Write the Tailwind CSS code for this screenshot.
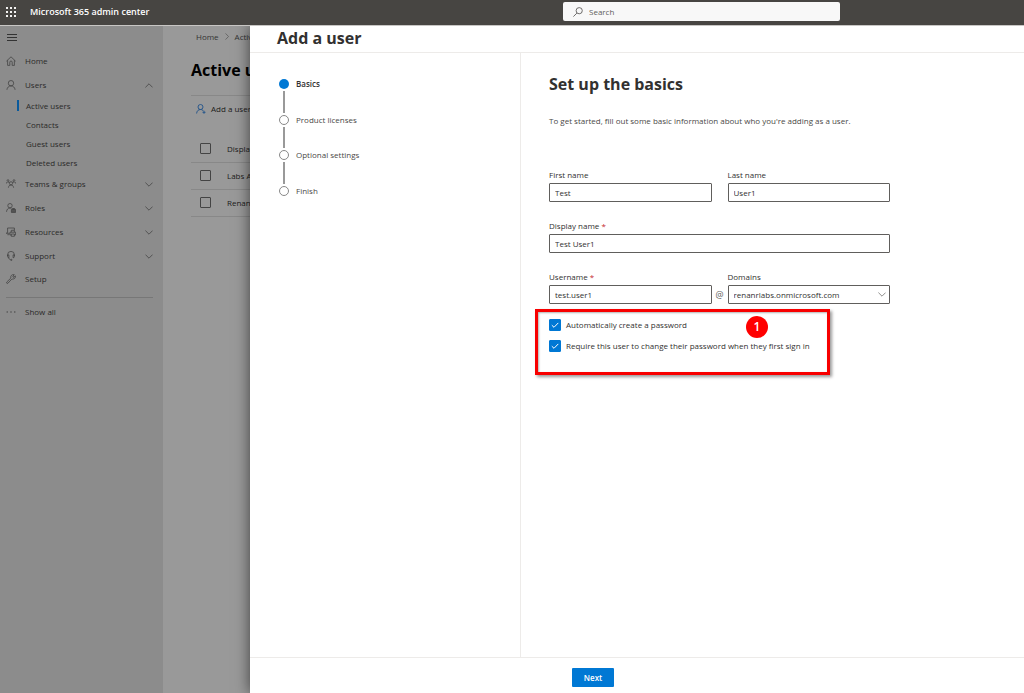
<!DOCTYPE html>
<html lang="en">
<head>
<meta charset="utf-8">
<meta name="viewport" content="width=device-width, initial-scale=1">
<title>Add a user - Microsoft 365 admin center</title>
<script src="https://cdn.jsdelivr.net/npm/@tailwindcss/browser@4"></script>
</head>
<body class="relative flex h-screen flex-col overflow-hidden bg-[#999] font-['Open_Sans','Noto_Sans',sans-serif] text-[8px] leading-3 text-[#323130]">

<header class="flex h-[26px] shrink-0 items-center border-b border-[#c8c6c4] bg-[#474542] pb-[2px] pl-[6px]">
  <button type="button" aria-label="App launcher" class="flex size-[10px] items-center justify-center">
    <svg class="size-[10px]" viewBox="0 0 10 10" fill="#f3f2f1"><rect width="2" height="2"/><rect x="4" width="2" height="2"/><rect x="8" width="2" height="2"/><rect y="4" width="2" height="2"/><rect x="4" y="4" width="2" height="2"/><rect x="8" y="4" width="2" height="2"/><rect y="8" width="2" height="2"/><rect x="4" y="8" width="2" height="2"/><rect x="8" y="8" width="2" height="2"/></svg>
  </button>
  <a href="#" class="ml-[14px] w-[533px] shrink-0 text-[9px] font-semibold text-white">Microsoft 365 admin center</a>
  <label class="flex h-[19px] w-[277px] items-center gap-[6px] rounded-[2px] bg-[#f8f8f8] px-[10px]">
    <svg class="size-[10px] shrink-0" viewBox="0 0 10 10" fill="none" stroke="#605e5c" stroke-width=".9"><circle cx="6.200" cy="3.700" r="3.100"/><path d="M3.900 6.100.4 9.600"/></svg>
    <input type="search" aria-label="Search" placeholder="Search" class="min-w-0 flex-1 outline-none placeholder:text-[#605e5c]">
  </label>
</header>

<div class="flex min-h-0 flex-1">
  <nav aria-label="Admin" class="w-[163px] shrink-0 bg-[#8c8c8c] text-[#2b2a29]">
    <button type="button" aria-label="Collapse navigation" class="flex h-[23px] items-center pl-[7px]">
      <svg class="h-[7px] w-[10px]" viewBox="0 0 10 7" stroke="#333" stroke-width="1"><path d="M0 .5h10M0 3.500h10M0 6.500h10"/></svg>
    </button>
    <a href="#" class="flex h-6 items-center gap-[9px] pl-[6px]">
      <svg class="size-[10px]" viewBox="0 0 10 10" fill="none" stroke="#444" stroke-width=".8"><path d="M.4 5.200 5 .8l4.600 4.400M1.600 4.200v5.200h2.200V6.200a1.200 1.200 0 0 1 2.400 0v3.200h2.200V4.200"/></svg>
      Home</a>
    <button type="button" aria-expanded="true" class="flex h-6 w-full items-center gap-[9px] pr-[10px] pl-[6px]">
      <svg class="size-[10px]" viewBox="0 0 10 10" fill="none" stroke="#444" stroke-width=".8"><circle cx="5" cy="3.200" r="2.700"/><path d="M.900 9.800C1.200 7.400 2.800 5.900 5 5.900s3.800 1.500 4.100 3.900"/></svg>
      <span class="flex-1 text-left">Users</span>
      <svg class="h-[5px] w-2" viewBox="0 0 8 5" fill="none" stroke="#444" stroke-width=".8"><path d="M.4 4.400 4 .8l3.600 3.600"/></svg>
    </button>
    <ul class="-mt-px">
      <li><a href="#" aria-current="page" class="flex h-[19px] items-center gap-[7px] pl-[17px]"><span class="h-[11px] w-[2px] bg-[#0a5a9c]"></span>Active users</a></li>
      <li><a href="#" class="flex h-[19px] items-center pl-[26px]">Contacts</a></li>
      <li><a href="#" class="flex h-[19px] items-center pl-[26px]">Guest users</a></li>
      <li><a href="#" class="flex h-[19px] items-center pl-[26px]">Deleted users</a></li>
    </ul>
    <button type="button" class="flex h-6 w-full items-center gap-[9px] pr-[10px] pl-[6px]">
      <svg class="size-[10px]" viewBox="0 0 10 10" fill="none" stroke="#444" stroke-width=".8"><circle cx="5" cy="4.300" r="1.600"/><path d="M2.400 8.700C2.600 7 3.500 6 5 6s2.400 1 2.600 2.700"/><path d="M.2 4.600C.3 3.500.9 2.900 1.900 2.900M1 1.900a1 1 0 1 1 1.900.3c-.2.500-.6.700-1 .7.700 0 1.200.3 1.500.9M9.800 4.600C9.700 3.500 9.100 2.900 8.100 2.900M9 1.900a1 1 0 1 0-1.900.3c.2.500.6.700 1 .7-.7 0-1.200.3-1.500.9"/></svg>
      <span class="flex-1 text-left">Teams &amp; groups</span>
      <svg class="h-[5px] w-2" viewBox="0 0 8 5" fill="none" stroke="#444" stroke-width=".8"><path d="M.4.6 4 4.200 7.600.6"/></svg>
    </button>
    <button type="button" class="flex h-6 w-full items-center gap-[9px] pr-[10px] pl-[6px]">
      <svg class="size-[10px]" viewBox="0 0 10 10" fill="none" stroke="#444" stroke-width=".8"><circle cx="4" cy="2.700" r="2.200"/><path d="M.500 8.800C.700 6.500 2 5 4 5c.6 0 1 .1 1.400.3"/><path d="M5.400 6.400h4.200v3H5.400zM6.500 6.400v-.9h2v.9" fill="#555"/></svg>
      <span class="flex-1 text-left">Roles</span>
      <svg class="h-[5px] w-2" viewBox="0 0 8 5" fill="none" stroke="#444" stroke-width=".8"><path d="M.4.6 4 4.200 7.600.6"/></svg>
    </button>
    <button type="button" class="flex h-6 w-full items-center gap-[9px] pr-[10px] pl-[6px]">
      <svg class="size-[10px]" viewBox="0 0 10 10" fill="none" stroke="#444" stroke-width=".8"><path d="M1.600 5.600V1h6.800v2.200M.2 6.300h3.600M.2 6.300l1.400-1M3.500 7.700H1.400"/><path d="M5.300 8H4V5.200h5.600V8H8.400M5.300 5.200V3.300h3.100v1.900M5.300 7h3.100v2.300H5.300z"/></svg>
      <span class="flex-1 text-left">Resources</span>
      <svg class="h-[5px] w-2" viewBox="0 0 8 5" fill="none" stroke="#444" stroke-width=".8"><path d="M.4.6 4 4.200 7.600.6"/></svg>
    </button>
    <button type="button" class="flex h-6 w-full items-center gap-[9px] pr-[10px] pl-[6px]">
      <svg class="size-[10px]" viewBox="0 0 10 10" fill="none" stroke="#444" stroke-width=".8"><path d="M1.600 5V3.800a3.400 3.400 0 0 1 6.800 0V5M1.600 3.900h1.300v2.900c-.8 0-1.300-.5-1.300-1.300zM8.400 3.900H7.100v2.900c.8 0 1.300-.5 1.300-1.300zM2.800 6.800c.2 1.200.9 1.900 2 2"/><circle cx="5.400" cy="8.900" r=".6"/></svg>
      <span class="flex-1 text-left">Support</span>
      <svg class="h-[5px] w-2" viewBox="0 0 8 5" fill="none" stroke="#444" stroke-width=".8"><path d="M.4.6 4 4.200 7.600.6"/></svg>
    </button>
    <a href="#" class="-mt-px flex h-6 items-center gap-[9px] pl-[6px]">
      <svg class="size-[10px]" viewBox="0 0 10 10" fill="none" stroke="#444" stroke-width=".8"><path d="M8.300.7 6.900 2.100l.1 1 1 .1L9.300 1.800c.5 1.600-.6 3.300-2.400 3.300-.4 0-.6 0-.9-.2L2 9.100c-.8.9-2-.2-1.200-1.100l4.100-4C4.100 2 6 0 8.300.7z"/></svg>
      Setup</a>
    <hr class="mt-[6px] mr-[10px] mb-[2px] ml-[6px] border-[#777]">
    <button type="button" class="flex h-6 items-center gap-[9px] pl-[6px]">
      <svg class="size-[10px]" viewBox="0 0 10 10" fill="#444"><circle cx="1.200" cy="5" r=".7"/><circle cx="5" cy="5" r=".7"/><circle cx="8.800" cy="5" r=".7"/></svg>
      Show all</button>
  </nav>

  <main class="min-w-0 flex-1 pl-[28px] whitespace-nowrap text-[#1b1a19]">
    <div class="flex h-[21px] items-center gap-[6px] pl-[5px] text-[#333]">
      <a href="#">Home</a>
      <svg class="h-[7px] w-1" viewBox="0 0 4 7" fill="none" stroke="#555" stroke-width=".7"><path d="M.5.4 3.500 3.500.5 6.600"/></svg>
      <a href="#">Active users</a>
    </div>
    <h1 class="mt-[13px] text-[16px] leading-5 font-bold text-black">Active users</h1>
    <div class="mt-[15px] flex h-[26px] items-center gap-[5px] border-t border-[#888] pl-[5px]">
      <svg class="size-[10px]" viewBox="0 0 10 10" fill="none" stroke="#20528a" stroke-width=".9"><circle cx="4.500" cy="3" r="2.500"/><path d="M.6 9.500C.8 7 2.300 5.500 4.500 5.500c1.300 0 2.300.6 2.900 1.500M6.500 8.300h3M8 6.800v3"/></svg>
      <button type="button">Add a user</button>
    </div>
    <table class="mt-[15px] w-full text-left text-[8px]">
      <thead>
        <tr class="h-[26px] border-b border-[#888]"><th class="w-[36px] pl-[9px]"><input type="checkbox" aria-label="Select all" class="block size-[11px] appearance-none rounded-[1px] border border-[#444]"></th><th class="font-normal">Display name</th></tr>
      </thead>
      <tbody>
        <tr class="h-[27px] border-b border-[#888]"><td class="pl-[9px]"><input type="checkbox" aria-label="Select Labs Admin" class="block size-[11px] appearance-none rounded-[1px] border border-[#444]"></td><td>Labs Admin</td></tr>
        <tr class="h-[27px] border-b border-[#888]"><td class="pl-[9px]"><input type="checkbox" aria-label="Select Renan" class="block size-[11px] appearance-none rounded-[1px] border border-[#444]"></td><td>Renan</td></tr>
      </tbody>
    </table>
  </main>
</div>

<!-- Side panel over the dimmed page -->
<section role="dialog" aria-labelledby="panel-title" class="absolute top-[26px] right-0 bottom-0 left-[250px] flex flex-col bg-white shadow-[0_0_14px_rgba(0,0,0,0.6)] [clip-path:inset(0_0_0_-30px)]">
  <header class="flex h-[27px] shrink-0 items-center border-b border-[#edebe9] pb-[2px] pl-[27px]">
    <h2 id="panel-title" class="text-[16px] leading-5 font-bold">Add a user</h2>
  </header>
  <div class="flex min-h-0 flex-1">
    <ol class="w-[271px] shrink-0 border-r border-[#edebe9] pt-[26px] pl-[29px] text-[#4a4846]">
      <li class="flex h-9 gap-[7px] font-semibold text-[#323130]"><span class="flex w-[10px] flex-col items-center gap-[2px]"><span class="size-[10px] shrink-0 rounded-full bg-[#0078d4]"></span><span class="mb-[2px] w-[2px] flex-1 bg-[#999]"></span></span><span class="leading-[10px]">Basics</span></li>
      <li class="flex h-[35px] gap-[7px]"><span class="flex w-[10px] flex-col items-center gap-[2px]"><span class="size-[10px] shrink-0 rounded-full border border-[#888]"></span><span class="mb-[2px] w-[2px] flex-1 bg-[#999]"></span></span><span class="leading-[10px]">Product licenses</span></li>
      <li class="flex h-9 gap-[7px]"><span class="flex w-[10px] flex-col items-center gap-[2px]"><span class="size-[10px] shrink-0 rounded-full border border-[#888]"></span><span class="mb-[2px] w-[2px] flex-1 bg-[#999]"></span></span><span class="leading-[10px]">Optional settings</span></li>
      <li class="flex gap-[7px]"><span class="size-[10px] shrink-0 rounded-full border border-[#888]"></span><span class="leading-[10px]">Finish</span></li>
    </ol>

    <form id="basics" class="min-w-0 flex-1 pt-[21px] pl-[28px]">
      <h3 class="text-[16px] leading-5 font-bold">Set up the basics</h3>
      <p class="mt-[21px] text-[#4a4846]">To get started, fill out some basic information about who you're adding as a user.</p>
      <div class="mt-[42px] grid max-w-[341px] grid-cols-[1fr_16px_1fr] gap-y-[18px]">
        <div class="flex flex-col gap-[2px]">
          <label for="first">First name</label>
          <input id="first" value="Test" class="h-[19px] w-full rounded-[1px] border border-[#605e5c] px-[5px]">
        </div>
        <div class="col-start-3 flex flex-col gap-[2px]">
          <label for="last">Last name</label>
          <input id="last" value="User1" class="h-[19px] w-full rounded-[1px] border border-[#605e5c] px-[5px]">
        </div>
        <div class="col-span-3 flex flex-col gap-[2px]">
          <label for="display">Display name <span class="text-[#c4262e]">*</span></label>
          <input id="display" value="Test User1" required class="h-[19px] w-full rounded-[1px] border border-[#605e5c] px-[5px]">
        </div>
        <div class="flex flex-col gap-[2px]">
          <label for="username">Username <span class="text-[#c4262e]">*</span></label>
          <input id="username" value="test.user1" required class="h-[19px] w-full rounded-[1px] border border-[#605e5c] px-[5px]">
        </div>
        <span class="flex h-[19px] items-center justify-center self-end text-[9px] text-[#605e5c]">@</span>
        <div class="flex flex-col gap-[2px]">
          <label for="domain">Domains</label>
          <div class="grid items-center">
            <select id="domain" class="col-start-1 row-start-1 h-[19px] w-full appearance-none rounded-[1px] border border-[#605e5c] px-[5px]"><option>renanrlabs.onmicrosoft.com</option></select>
            <svg class="pointer-events-none col-start-1 row-start-1 mr-1 h-[5px] w-2 justify-self-end" viewBox="0 0 8 5" fill="none" stroke="#605e5c" stroke-width=".7"><path d="M.4.6 4 4.200 7.600.6"/></svg>
          </div>
        </div>
      </div>
      <!-- Highlighted password options -->
      <div class="relative mt-[5px] -ml-[14px] flex h-[66px] w-[295px] flex-col gap-[9px] border-[3px] border-[#f80000] pt-[7px] pl-[11px] shadow-[2px_2px_3px_rgba(0,0,0,0.4),inset_1px_1px_2px_rgba(0,0,0,0.3)]">
        <label class="flex h-3 items-center gap-[5px]">
          <span class="grid size-3 shrink-0"><input type="checkbox" checked class="col-start-1 row-start-1 size-3 appearance-none rounded-[1px] border border-[#0078d4] checked:bg-[#0078d4]"><svg class="pointer-events-none col-start-1 row-start-1 size-3" viewBox="0 0 12 12" fill="none" stroke="#fff" stroke-width="1"><path d="M2.800 6.200 5 8.300l4.300-4.400"/></svg></span>
          Automatically create a password</label>
        <label class="flex h-3 items-center gap-[5px]">
          <span class="grid size-3 shrink-0"><input type="checkbox" checked class="col-start-1 row-start-1 size-3 appearance-none rounded-[1px] border border-[#0078d4] checked:bg-[#0078d4]"><svg class="pointer-events-none col-start-1 row-start-1 size-3" viewBox="0 0 12 12" fill="none" stroke="#fff" stroke-width="1"><path d="M2.800 6.200 5 8.300l4.300-4.400"/></svg></span>
          Require this user to change their password when they first sign in</label>
        <span class="absolute top-1 right-[59px] flex size-[22px] items-center justify-center rounded-full bg-[#f00] text-[12px] font-semibold text-white">1</span>
      </div>
    </form>
  </div>
  <footer class="flex h-[36px] shrink-0 items-center border-t border-[#edebe9] pt-1 pl-[322px]">
    <button type="submit" form="basics" class="h-[19px] w-[42px] rounded-[1px] bg-[#0078d4] font-semibold text-white">Next</button>
  </footer>
</section>
</body>
</html>
